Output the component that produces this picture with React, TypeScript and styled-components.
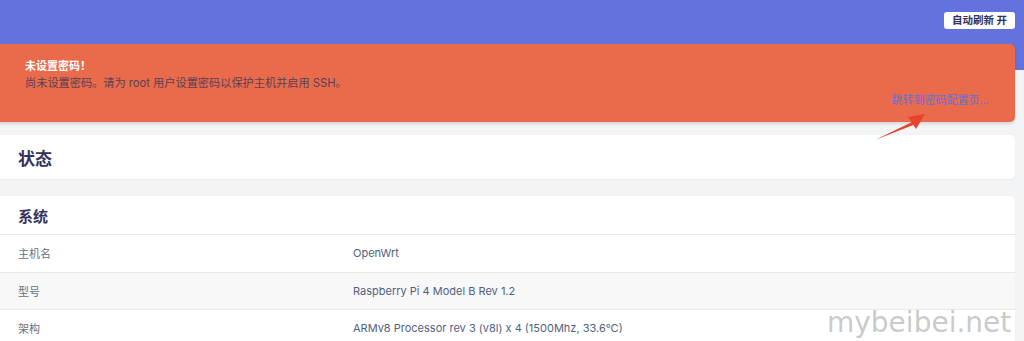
import React from "react";
import styled, { createGlobalStyle } from "styled-components";

const GlobalStyle = createGlobalStyle`
  html, body {
    margin: 0;
    padding: 0;
    background: #f3f4f6;
    overflow: hidden;
    font-family: Inter, "Noto Sans CJK SC", "Noto Sans", sans-serif;
  }
  * {
    box-sizing: border-box;
  }
`;

const Page = styled.div`
  position: relative;
  width: 1024px;
  height: 341px;
  overflow: hidden;
`;

const Header = styled.header`
  height: 70px;
  background: #6372dd;
  display: flex;
  justify-content: flex-end;
  align-items: flex-start;
  padding: 12px 9px 0 0;
`;

const RefreshButton = styled.button`
  height: 17px;
  padding: 0 8px;
  border: none;
  border-radius: 3px;
  background: #ffffff;
  color: #32325d;
  font-family: inherit;
  font-size: 10.5px;
  font-weight: 700;
  line-height: 17px;
`;

const Main = styled.main`
  margin: -26px 9px 0 -6px;
`;

const Alert = styled.div`
  background: #e96b4c;
  border-radius: 5px;
  padding: 14px 26px 13px 31px;
  box-shadow: 0 2px 3px rgba(0, 0, 0, 0.12);
  font-size: 11.2px;
  line-height: 17px;
`;

const AlertTitle = styled.div`
  color: #ffffff;
  font-weight: 700;
  font-size: 11px;
`;

const AlertText = styled.div`
  color: #5a3f55;
`;

const AlertLink = styled.a`
  display: block;
  text-align: right;
  color: #6670d6;
  font-size: 11px;
  text-decoration: none;
`;

const Card = styled.section<{ $gap: number }>`
  margin-top: ${(p) => p.$gap}px;
  background: #ffffff;
  border-radius: 5px;
  box-shadow: 0 1px 2px rgba(0, 0, 0, 0.04);
  overflow: hidden;
`;

const CardTitle = styled.h2<{ $size: number; $height: number }>`
  margin: 0;
  height: ${(p) => p.$height}px;
  display: flex;
  align-items: center;
  padding-left: 24px;
  font-size: ${(p) => p.$size}px;
  font-weight: 700;
  color: #32325d;
`;

const Row = styled.div<{ $striped: boolean }>`
  display: grid;
  grid-template-columns: 335px 1fr;
  align-items: center;
  height: 37.5px;
  padding-left: 24px;
  border-top: 1px solid #e6e8ec;
  background: ${(p) => (p.$striped ? "#f8f8f9" : "#ffffff")};
  font-size: 11px;
`;

const Label = styled.span`
  color: #6b6f80;
`;

const Value = styled.span`
  color: #525f7f;
`;

const Arrow = styled.svg`
  position: absolute;
  left: 870px;
  top: 108px;
`;

const Watermark = styled.div`
  position: absolute;
  left: 827px;
  top: 306px;
  font-family: "DejaVu Sans", sans-serif;
  font-size: 28px;
  line-height: 34px;
  color: rgba(185, 185, 185, 0.75);
  white-space: nowrap;
`;

const rows = [
  { label: "主机名", value: "OpenWrt" },
  { label: "型号", value: "Raspberry Pi 4 Model B Rev 1.2" },
  { label: "架构", value: "ARMv8 Processor rev 3 (v8l) x 4 (1500Mhz, 33.6°C)" },
];

const App: React.FC = () => {
  return (
    <Page>
      <GlobalStyle />
      <Header>
        <RefreshButton>自动刷新 开</RefreshButton>
      </Header>
      <Main>
        <Alert>
          <AlertTitle>未设置密码！</AlertTitle>
          <AlertText>尚未设置密码。请为 root 用户设置密码以保护主机并启用 SSH。</AlertText>
          <AlertLink href="#">跳转到密码配置页...</AlertLink>
        </Alert>
        <Card $gap={13}>
          <CardTitle $size={17} $height={44}>
            状态
          </CardTitle>
        </Card>
        <Card $gap={17}>
          <CardTitle $size={15} $height={38}>
            系统
          </CardTitle>
          {rows.map((r, i) => (
            <Row key={r.label} $striped={i % 2 === 1}>
              <Label>{r.label}</Label>
              <Value>{r.value}</Value>
            </Row>
          ))}
        </Card>
      </Main>
      <Arrow width="60" height="36" viewBox="0 0 60 36">
        <path d="M5 32 L43 13.5 L44.5 16.5 Z" fill="#e8432b" />
        <path d="M55 6 L38 9 L46 21 Z" fill="#e8432b" />
      </Arrow>
      <Watermark>mybeibei.net</Watermark>
    </Page>
  );
};

export default App;
